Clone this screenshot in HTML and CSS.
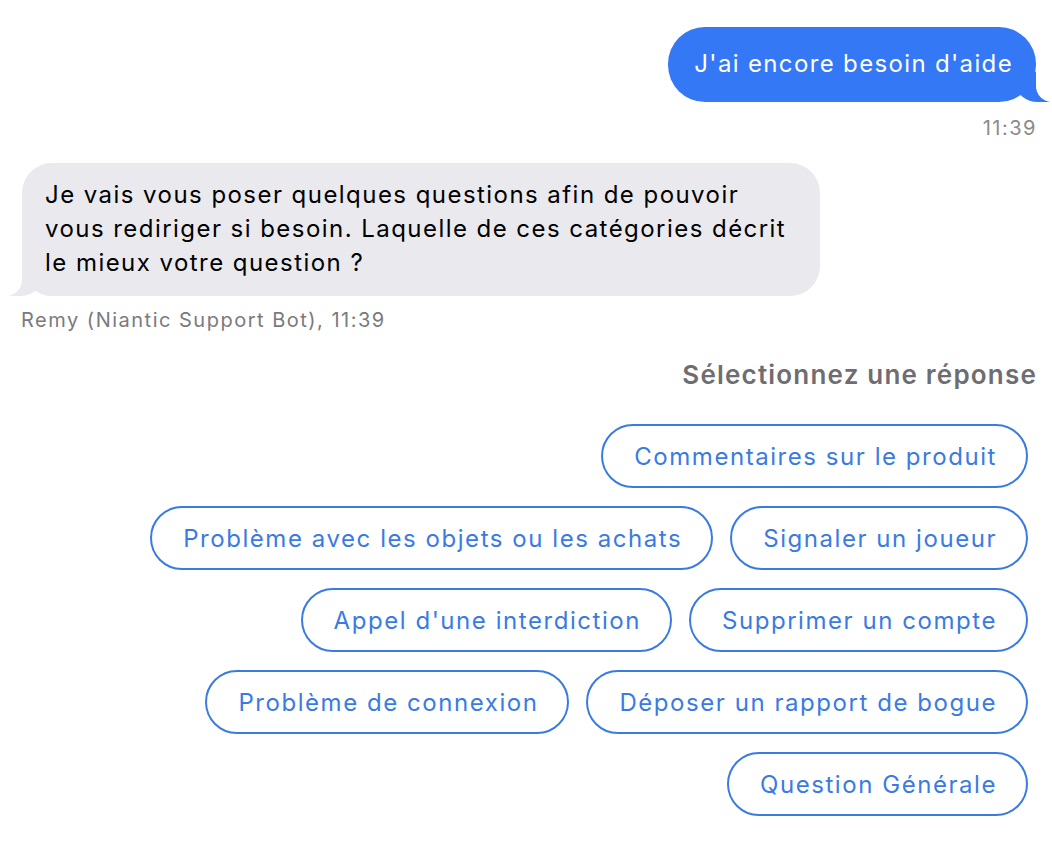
FILE: index.html
```html
<!DOCTYPE html>
<html lang="fr">
<head>
    <meta charset="UTF-8">
    <meta name="viewport" content="width=device-width, initial-scale=1.0">
    <title>Support Niantic</title>
    <link rel="stylesheet" href="styles.css">
</head>
<body>
    <div class="chat">
        <div class="row row-sent">
            <div class="bubble sent">J'ai encore besoin d'aide</div>
        </div>
        <div class="time time-sent">11:39</div>

        <div class="row row-received">
            <div class="bubble received">Je vais vous poser quelques questions afin de pouvoir<br>vous rediriger si besoin. Laquelle de ces catégories décrit<br>le mieux votre question ?</div>
        </div>
        <div class="time time-received">Remy (Niantic Support Bot), 11:39</div>

        <div class="prompt">Sélectionnez une réponse</div>

        <div class="replies">
            <div class="reply-row">
                <button class="reply">Commentaires sur le produit</button>
            </div>
            <div class="reply-row">
                <button class="reply">Problème avec les objets ou les achats</button>
                <button class="reply">Signaler un joueur</button>
            </div>
            <div class="reply-row">
                <button class="reply">Appel d'une interdiction</button>
                <button class="reply">Supprimer un compte</button>
            </div>
            <div class="reply-row">
                <button class="reply">Problème de connexion</button>
                <button class="reply">Déposer un rapport de bogue</button>
            </div>
            <div class="reply-row">
                <button class="reply">Question Générale</button>
            </div>
        </div>
    </div>
</body>
</html>
```
FILE: styles.css
```css
body {
    margin: 0;
    background: #ffffff;
    font-family: Inter, "Liberation Sans", Arial, sans-serif;
    color: #000000;
}
.chat {
    padding: 27px 16px 20px 22px;
    display: flex;
    flex-direction: column;
}
.row {
    display: flex;
}
.row-sent {
    justify-content: flex-end;
}
.bubble {
    position: relative;
    font-size: 24px;
    line-height: 34px;
    letter-spacing: 1.35px;
    border-radius: 37px;
}
.sent {
    background: #3478f6;
    color: #ffffff;
    padding: 20px 23px 21px 26px;
}
.sent::before {
    content: "";
    position: absolute;
    bottom: 0;
    right: -14px;
    width: 34px;
    height: 30px;
    background: #3478f6;
    border-bottom-left-radius: 22px 18px;
}
.sent::after {
    content: "";
    position: absolute;
    bottom: 0;
    right: -40px;
    width: 40px;
    height: 30px;
    background: #ffffff;
    border-bottom-left-radius: 16px;
}
.received {
    background: #e9e9ee;
    width: 798px;
    box-sizing: border-box;
    padding: 15px 20px 16px 23px;
    border-radius: 30px;
    letter-spacing: 1.45px;
}
.received::before {
    content: "";
    position: absolute;
    bottom: 0;
    left: -14px;
    width: 34px;
    height: 30px;
    background: #e9e9ee;
    border-bottom-right-radius: 22px 18px;
}
.received::after {
    content: "";
    position: absolute;
    bottom: 0;
    left: -40px;
    width: 40px;
    height: 30px;
    background: #ffffff;
    border-bottom-right-radius: 16px;
}
.time {
    font-size: 20px;
    line-height: 22px;
    letter-spacing: 1.5px;
    color: #8a8a8e;
}
.time-sent {
    text-align: right;
    margin-top: 15px;
    margin-bottom: 24px;
    margin-right: -1px;
}
.time-received {
    margin-top: 13px;
    margin-left: -1px;
    color: #7a7a7e;
}
.prompt {
    text-align: right;
    font-size: 26px;
    font-weight: 600;
    letter-spacing: 1.2px;
    color: #6d6d72;
    margin-top: 28px;
    margin-right: -1px;
    line-height: 32px;
}
.replies {
    display: flex;
    flex-direction: column;
    gap: 18px;
    margin-top: 33px;
    padding-right: 8px;
}
.reply-row {
    display: flex;
    justify-content: flex-end;
    gap: 17px;
}
.reply {
    font-family: inherit;
    font-size: 24px;
    letter-spacing: 1.55px;
    height: 64px;
    padding: 0 29px 0 31px;
    border: 2px solid #3a7be2;
    border-radius: 32px;
    background: #ffffff;
    color: #3a7be2;
    cursor: pointer;
}
```
